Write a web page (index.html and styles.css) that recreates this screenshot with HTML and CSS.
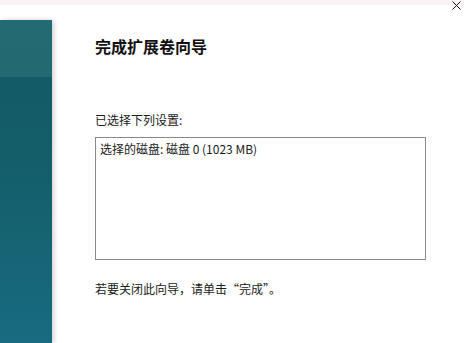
FILE: index.html
```html
<!DOCTYPE html>
<html lang="zh-CN">
<head>
<meta charset="utf-8">
<link rel="stylesheet" href="styles.css">
</head>
<body>
<div class="topbar"></div>
<button class="close" aria-label="关闭">
  <svg width="9" height="9" viewBox="0 0 9 9"><path d="M0.5 0.5L8.5 8.5M8.5 0.5L0.5 8.5" stroke="#111" stroke-width="1"/></svg>
</button>
<div class="main">
  <div class="side"></div>
  <div class="content">
    <h1 class="title">完成扩展卷向导</h1>
    <p class="label">已选择下列设置:</p>
    <div class="box">选择的磁盘: 磁盘 0 (1023 MB)</div>
    <p class="hint">若要关闭此向导，请单击“完成”。</p>
  </div>
</div>
</body>
</html>
```
FILE: styles.css
```css
html, body {
  margin: 0;
  padding: 0;
}
body {
  width: 464px;
  height: 343px;
  overflow: hidden;
  background: #ffffff;
  font-family: "Noto Sans CJK SC", "Noto Sans", sans-serif;
  color: #1a1a1a;
  position: relative;
}
.topbar {
  height: 5px;
  background: #fcf3f6;
}
.close {
  position: absolute;
  top: 1px;
  right: 3px;
  border: 0;
  background: transparent;
  padding: 0;
  width: 9px;
  height: 9px;
  line-height: 0;
}
.main {
  display: flex;
  height: 338px;
}
.side {
  width: 52px;
  flex: none;
  margin-top: 15px;
  background:
    linear-gradient(to bottom, #236a72 0, #226971 57px, #135b66 57px, #145f6c 160px, #186b80 100%);
  box-shadow: 2px 0 5px rgba(0, 0, 0, 0.18);
}
.content {
  padding-left: 43px;
  padding-top: 30px;
  width: 331px;
}
.title {
  margin: 0;
  font-size: 16px;
  line-height: 22px;
  font-weight: 700;
  color: #111;
}
.label {
  margin: 55px 0 0;
  font-size: 12px;
  line-height: 16px;
}
.box {
  margin-top: 9px;
  height: 123px;
  border: 1px solid #8a8a8a;
  padding: 3px 4px;
  box-sizing: border-box;
  font-size: 12px;
  line-height: 16px;
}
.hint {
  margin: 21px 0 0;
  font-size: 12px;
  line-height: 16px;
}
```
